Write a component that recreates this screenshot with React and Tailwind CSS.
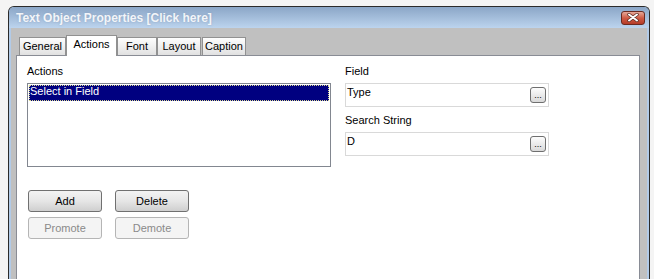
import React from 'react';

const ui = "font-['Liberation_Sans',Arial,sans-serif] text-[11px] leading-[13px]";

function Tab({ label, active, width, className = '' }) {
  if (active) {
    return (
      <div
        className={`relative z-10 -mb-[1px] flex h-[21px] shrink-0 justify-center border border-b-0 border-[#919191] bg-white pt-[2px] text-black ${className}`}
        style={{ width }}
      >
        {label}
      </div>
    );
  }
  return (
    <div
      className={`flex h-[18px] shrink-0 items-center justify-center border border-b-0 border-[#919191] bg-gradient-to-b from-[#fdfdfd] to-[#e1e1e1] text-black ${className}`}
      style={{ width }}
    >
      {label}
    </div>
  );
}

function EllipsisButton() {
  return (
    <div className="mr-[2px] mt-[3px] flex h-[16px] w-[16px] items-end justify-center rounded-[3px] border border-[#6f6f6f] bg-gradient-to-b from-[#fdfdfd] to-[#d9d9d9] pb-[2px] text-[9px] leading-none text-black">
      ...
    </div>
  );
}

function FieldInput({ value }) {
  return (
    <div className="mt-[5px] flex h-[24px] w-[204px] items-start justify-between border border-[#d9d9d9] bg-white pl-[1px]">
      <span className="pt-[2px] text-black">{value}</span>
      <EllipsisButton />
    </div>
  );
}

function PushButton({ label, disabled, className = '' }) {
  return (
    <div
      className={`flex h-[22px] w-[74px] items-center justify-center rounded-[3px] border ${
        disabled
          ? 'border-[#b5b5b5] bg-[#f4f4f4] text-[#8a8a8a]'
          : 'border-[#707070] bg-gradient-to-b from-[#f3f3f3] via-[#e6e6e6] to-[#cfcfcf] text-black'
      } ${className}`}
    >
      {label}
    </div>
  );
}

function CloseButton() {
  return (
    <div className="flex h-[14px] w-[24px] items-center justify-center rounded-[3px] border border-[#6b2a20] bg-gradient-to-b from-[#e6a899] via-[#cf5b45] to-[#b53b28]">
      <svg width="12" height="9" viewBox="0 0 12 9">
        <path d="M2 1.5 L10 7.5 M10 1.5 L2 7.5" stroke="#5a2a22" strokeWidth="3.4" strokeLinecap="round" />
        <path d="M2 1.5 L10 7.5 M10 1.5 L2 7.5" stroke="#ffffff" strokeWidth="2" strokeLinecap="round" />
      </svg>
    </div>
  );
}

export default function App() {
  return (
    <div className={`h-[279px] w-[654px] overflow-hidden bg-[#f4f4f4] pl-[8px] pt-[6px] ${ui}`}>
      <div className="flex h-[300px] w-[642px] flex-col overflow-hidden rounded-t-[6px] border border-b-0 border-[#2b2b2b] bg-[#b2cbe8]">
        <div className="flex h-[21px] shrink-0 items-center justify-between bg-gradient-to-b from-[#8ba6c7] to-[#bcd4ee] pl-[7px] pr-[4px]">
          <span className="text-[12px] font-bold leading-[14px] text-[#f2f5f9] [text-shadow:0_0_2px_rgba(120,140,170,0.6)]">
            Text Object Properties [Click here]
          </span>
          <CloseButton />
        </div>
        <div className="flex-1 px-[2px]">
          <div className="h-full bg-[#c0c0c0] pl-[5px] pr-[7px] pt-[7px]">
            <div className="flex h-[20px] items-end pl-[3px]">
              <Tab label="General" width={47} />
              <Tab label="Actions" width={51} active />
              <Tab label="Font" width={40} />
              <Tab label="Layout" width={44} />
              <Tab label="Caption" width={44} className="ml-[1px]" />
            </div>
            <div className="h-[260px] w-[624px] border border-[#898c95] bg-white pl-[10px] pt-[9px]">
              <div className="flex">
                <div className="w-[304px]">
                  <div className="text-black">Actions</div>
                  <div className="mt-[5px] h-[84px] border border-[#828790] bg-white p-[1px]">
                    <div className="h-[16px] bg-[#000080] pl-[1px] text-white outline-1 -outline-offset-1 outline-dotted outline-[#d8d890]">
                      Select in Field
                    </div>
                  </div>
                  <div className="ml-[1px] mt-[23px] flex gap-[13px]">
                    <PushButton label="Add" />
                    <PushButton label="Delete" />
                  </div>
                  <div className="ml-[1px] mt-[5px] flex gap-[13px]">
                    <PushButton label="Promote" disabled />
                    <PushButton label="Demote" disabled />
                  </div>
                </div>
                <div className="ml-[14px]">
                  <div className="text-black">Field</div>
                  <FieldInput value="Type" />
                  <div className="mt-[7px] text-black">Search String</div>
                  <FieldInput value="D" />
                </div>
              </div>
            </div>
          </div>
        </div>
      </div>
    </div>
  );
}
